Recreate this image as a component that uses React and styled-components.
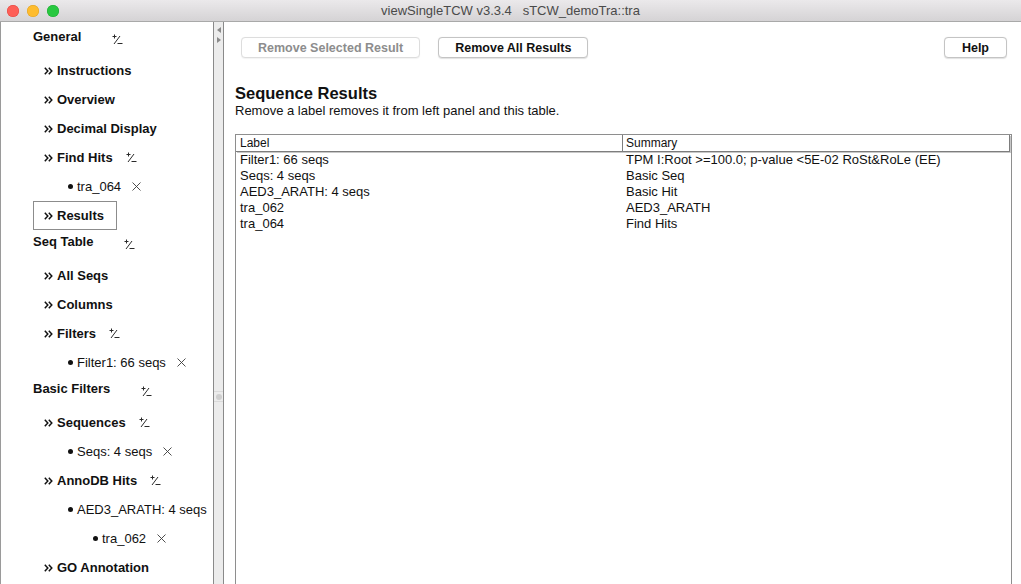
import styled, { createGlobalStyle } from 'styled-components'

const GlobalStyle = createGlobalStyle`
    html, body {
        margin: 0;
        padding: 0;
        background: #ffffff;
    }
    body {
        font-family: "Liberation Sans", Arial, sans-serif;
        color: #111111;
    }
`

const tree = [
    { kind: 'head', text: 'General' },
    { kind: 'item', text: 'Instructions' },
    { kind: 'item', text: 'Overview' },
    { kind: 'item', text: 'Decimal Display' },
    { kind: 'item', text: 'Find Hits', toggle: true },
    { kind: 'leaf', text: 'tra_064', level: 1, close: true },
    { kind: 'item', text: 'Results', selected: true },
    { kind: 'head', text: 'Seq Table' },
    { kind: 'item', text: 'All Seqs' },
    { kind: 'item', text: 'Columns' },
    { kind: 'item', text: 'Filters', toggle: true },
    { kind: 'leaf', text: 'Filter1: 66 seqs', level: 1, close: true },
    { kind: 'head', text: 'Basic Filters' },
    { kind: 'item', text: 'Sequences', toggle: true },
    { kind: 'leaf', text: 'Seqs: 4 seqs', level: 1, close: true },
    { kind: 'item', text: 'AnnoDB Hits', toggle: true },
    { kind: 'leaf', text: 'AED3_ARATH: 4 seqs', level: 1 },
    { kind: 'leaf', text: 'tra_062', level: 2, close: true },
    { kind: 'item', text: 'GO Annotation' },
]

const results = [
    ['Filter1: 66 seqs', 'TPM I:Root >=100.0; p-value <5E-02 RoSt&RoLe (EE)'],
    ['Seqs: 4 seqs', 'Basic Seq'],
    ['AED3_ARATH: 4 seqs', 'Basic Hit'],
    ['tra_062', 'AED3_ARATH'],
    ['tra_064', 'Find Hits'],
]

const ToggleIcon = () => (
    <svg width="11" height="11" viewBox="0 0 11 11">
        <g stroke="#2a2a2a" strokeWidth="1" fill="none">
            <line x1="0.5" y1="2.5" x2="4.5" y2="2.5" />
            <line x1="2.5" y1="0.5" x2="2.5" y2="4.5" />
            <line x1="2" y1="10" x2="8" y2="2" />
            <line x1="5.5" y1="9.5" x2="10.5" y2="9.5" />
        </g>
    </svg>
)

const CloseIcon = () => (
    <svg width="9" height="9" viewBox="0 0 9 9">
        <g stroke="#3a3a3a" strokeWidth="0.9">
            <line x1="0.5" y1="0.5" x2="8.5" y2="8.5" />
            <line x1="8.5" y1="0.5" x2="0.5" y2="8.5" />
        </g>
    </svg>
)

const ChevronIcon = () => (
    <svg width="9" height="8" viewBox="0 0 9 8">
        <g stroke="#111111" strokeWidth="1.5" fill="none" strokeLinejoin="miter">
            <polyline points="0.8,0.8 3.8,4 0.8,7.2" />
            <polyline points="4.8,0.8 7.8,4 4.8,7.2" />
        </g>
    </svg>
)

const TreeRow = ({ node }) => {
    if (node.kind === 'head') {
        return (
            <HeadRow>
                <HeadLabel>{node.text}</HeadLabel>
                <HeadToggle><ToggleIcon /></HeadToggle>
            </HeadRow>
        )
    }
    if (node.kind === 'leaf') {
        return (
            <ItemRow>
                <LeafLabel level={node.level}>
                    <Bullet />
                    {node.text}
                </LeafLabel>
                {node.close && <ItemIcon><CloseIcon /></ItemIcon>}
            </ItemRow>
        )
    }
    return (
        <ItemRow>
            <ItemLabel selected={node.selected}>
                <Chevron><ChevronIcon /></Chevron>
                {node.text}
            </ItemLabel>
            {node.toggle && <ItemIcon><ToggleIcon /></ItemIcon>}
        </ItemRow>
    )
}

const App = () => {
    return (
        <Window>
            <GlobalStyle />
            <TitleBar>
                <Lights>
                    <Light color="#fe5f57" edge="#e14640" />
                    <Light color="#febc2e" edge="#dfa123" />
                    <Light color="#28c840" edge="#1eaa32" />
                </Lights>
                <Title>viewSingleTCW v3.3.4&nbsp;&nbsp;&nbsp;sTCW_demoTra::tra</Title>
            </TitleBar>
            <Body>
                <Sidebar>
                    {tree.map((node, i) => <TreeRow key={i} node={node} />)}
                </Sidebar>
                <Divider>
                    <Arrows>
                        <svg width="6" height="18" viewBox="0 0 6 18">
                            <polygon points="5,1 5,7 1,4" fill="#8a8a8a" />
                            <polygon points="1,11 1,17 5,14" fill="#8a8a8a" />
                        </svg>
                    </Arrows>
                    <Grip />
                </Divider>
                <Main>
                    <Toolbar>
                        <ButtonGroup>
                            <Button disabled>Remove Selected Result</Button>
                            <Button>Remove All Results</Button>
                        </ButtonGroup>
                        <Button wide>Help</Button>
                    </Toolbar>
                    <Heading>Sequence Results</Heading>
                    <Description>Remove a label removes it from left panel and this table.</Description>
                    <Table>
                        <HeaderRow>
                            <HeaderCell>Label</HeaderCell>
                            <HeaderCell>Summary</HeaderCell>
                        </HeaderRow>
                        {results.map(([label, summary]) => (
                            <DataRow key={label}>
                                <Cell>{label}</Cell>
                                <Cell second>{summary}</Cell>
                            </DataRow>
                        ))}
                    </Table>
                </Main>
            </Body>
        </Window>
    )
}

const Window = styled.div`
    width: 1021px;
    height: 584px;
    display: flex;
    flex-direction: column;
    overflow: hidden;
    background: #ffffff;
`
const TitleBar = styled.div`
    height: 22px;
    flex: none;
    position: relative;
    display: flex;
    align-items: center;
    justify-content: center;
    background: linear-gradient(#ebe9eb, #d5d3d5);
    border-bottom: 1px solid #a9a9a9;
    box-sizing: border-box;
`
const Lights = styled.div`
    position: absolute;
    left: 7px;
    top: 5px;
    display: flex;
    gap: 8px;
`
const Light = styled.span`
    width: 12px;
    height: 12px;
    border-radius: 50%;
    background: ${p => p.color};
    box-shadow: inset 0 0 0 0.5px ${p => p.edge};
`
const Title = styled.div`
    font-size: 13px;
    color: #4a4a4a;
`
const Body = styled.div`
    flex: 1;
    display: flex;
    min-height: 0;
`
const Sidebar = styled.div`
    width: 214px;
    flex: none;
    box-sizing: border-box;
    padding-top: 3px;
    border-left: 1px solid #9a9a9a;
    border-right: 1px solid #8a8a8a;
    background: #ffffff;
    display: flex;
    flex-direction: column;
`
const HeadRow = styled.div`
    height: 31px;
    flex: none;
    display: flex;
    align-items: center;
    padding-left: 32px;
`
const HeadLabel = styled.span`
    font-size: 13px;
    font-weight: 700;
    margin-bottom: 8px;
    margin-right: 31px;
`
const HeadToggle = styled.span`
    display: flex;
    margin-bottom: 2px;
`
const ItemRow = styled.div`
    height: 29px;
    flex: none;
    display: flex;
    align-items: center;
`
const ItemLabel = styled.span`
    height: 29px;
    box-sizing: border-box;
    display: flex;
    align-items: center;
    font-size: 13px;
    font-weight: 700;
    white-space: nowrap;
    margin-left: ${p => (p.selected ? '32px' : '43px')};
    padding: ${p => (p.selected ? '0 12px 0 10px' : '0')};
    border: ${p => (p.selected ? '1px solid #8c8c8c' : 'none')};
    margin-right: 13px;
`
const Chevron = styled.span`
    display: flex;
    margin-right: 4px;
`
const LeafLabel = styled.span`
    display: flex;
    align-items: center;
    font-size: 13px;
    white-space: nowrap;
    margin-left: ${p => (p.level === 2 ? '92px' : '67px')};
    margin-right: 11px;
`
const Bullet = styled.span`
    width: 5px;
    height: 5px;
    border-radius: 50%;
    background: #111111;
    margin-right: 4px;
`
const ItemIcon = styled.span`
    display: flex;
`
const Divider = styled.div`
    width: 9px;
    flex: none;
    background: #ececec;
    border-right: 1px solid #8a8a8a;
    display: flex;
    flex-direction: column;
    align-items: center;
`
const Arrows = styled.div`
    display: flex;
    padding-top: 4px;
`
const Grip = styled.div`
    margin-top: 347px;
    width: 9px;
    height: 9px;
    border-top: 1px solid #dadada;
    border-bottom: 1px solid #dadada;
    display: flex;
    align-items: center;
    justify-content: center;
    &::after {
        content: '';
        width: 6px;
        height: 6px;
        border-radius: 50%;
        background: #cfcfcf;
    }
`
const Main = styled.div`
    flex: 1;
    display: flex;
    flex-direction: column;
    padding: 15px 9px 0 11px;
    min-width: 0;
`
const Toolbar = styled.div`
    display: flex;
    justify-content: space-between;
    padding: 0 5px 0 6px;
`
const ButtonGroup = styled.div`
    display: flex;
    gap: 18px;
`
const Button = styled.button`
    height: 21px;
    padding: 0 ${p => (p.wide ? '17px' : '16px')};
    font-family: "Liberation Sans", Arial, sans-serif;
    font-size: 12.5px;
    font-weight: 700;
    color: ${p => (p.disabled ? '#8d8d8d' : '#111111')};
    background: #ffffff;
    border: 1px solid ${p => (p.disabled ? '#dddddd' : '#c4c4c4')};
    border-radius: 4px;
    box-shadow: 0 0.5px 1px rgba(0, 0, 0, ${p => (p.disabled ? '0.05' : '0.12')});
`
const Heading = styled.h2`
    margin: 26px 0 0;
    font-size: 16.5px;
    font-weight: 700;
    line-height: 19px;
`
const Description = styled.div`
    font-size: 13px;
    line-height: 16px;
`
const Table = styled.div`
    margin-top: 15px;
    flex: 1;
    border: 1px solid #8e8e8e;
    border-bottom: none;
    display: flex;
    flex-direction: column;
`
const HeaderRow = styled.div`
    display: grid;
    grid-template-columns: 387px 1fr;
    height: 17px;
    margin-right: 1px;
    border-right: 1px solid #7d7d7d;
    border-bottom: 1px solid #7d7d7d;
    box-shadow: 1px 1px 0 #c8c8c8;
    box-sizing: border-box;
`
const HeaderCell = styled.div`
    font-size: 12px;
    line-height: 16px;
    padding-left: 4px;
    &:first-child {
        border-right: 1px solid #7d7d7d;
    }
    &:last-child {
        padding-left: 3px;
    }
`
const DataRow = styled.div`
    display: grid;
    grid-template-columns: 387px 1fr;
    height: 16px;
`
const Cell = styled.div`
    font-size: 13px;
    line-height: 16px;
    padding-left: ${p => (p.second ? '3px' : '4px')};
    white-space: nowrap;
`

export default App
